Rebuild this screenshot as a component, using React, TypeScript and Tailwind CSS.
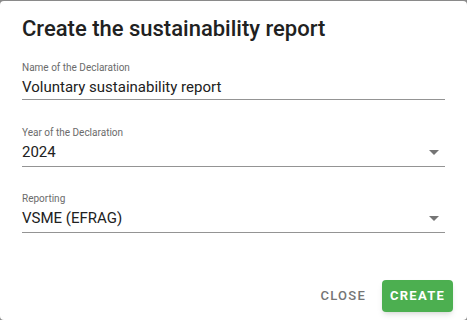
import { useState } from 'react';

type FieldProps = {
  label: string;
  value: string;
  className?: string;
};

function ArrowDown() {
  return (
    <svg className="w-[10px] h-[5px] text-[#757575]" viewBox="0 0 10 5" fill="currentColor">
      <path d="M0 0l5 5 5-5z" />
    </svg>
  );
}

function TextField({ label, value, className }: FieldProps) {
  return (
    <div className={`flex flex-col border-b border-[#949494] ${className ?? ''}`}>
      <span className="text-[10px] leading-[12px] text-[#6b6b6b]">{label}</span>
      <span className="mt-[3px] text-[15px] leading-[20px] text-[#212121] pb-[2px]">{value}</span>
    </div>
  );
}

function SelectField({ label, value, className }: FieldProps) {
  return (
    <div className={`flex flex-col border-b border-[#949494] pb-[2px] ${className ?? ''}`}>
      <span className="text-[10px] leading-[12px] text-[#6b6b6b]">{label}</span>
      <div className="mt-[1px] h-[24px] flex items-center justify-between">
        <span className="text-[15px] leading-[20px] text-[#212121]">{value}</span>
        <span className="mr-[6px] flex">
          <ArrowDown />
        </span>
      </div>
    </div>
  );
}

export default function App() {
  const [open] = useState(true);
  if (!open) return null;

  return (
    <div className="w-[467px] h-[320px] bg-[#8a8a8a] pt-px font-['Roboto',sans-serif]">
      <div className="h-[319px] bg-white rounded-[4px] flex flex-col">
        <h1 className="px-[22px] pt-[12px] text-[22px] leading-[32px] font-medium text-[#212121]">
          Create the sustainability report
        </h1>

        <div className="pl-[22px] pr-[22px] mt-[17px] flex flex-col">
          <TextField label="Name of the Declaration" value="Voluntary sustainability report" />
          <SelectField className="mt-[27px]" label="Year of the Declaration" value="2024" />
          <SelectField className="mt-[26px]" label="Reporting" value="VSME (EFRAG)" />
        </div>

        <div className="mt-auto flex items-center justify-end gap-[4px] pr-[14px] pb-[8px]">
          <button className="h-[32px] px-[12px] rounded-[4px] text-[13px] font-medium tracking-[1.25px] text-[#757575]">
            CLOSE
          </button>
          <button className="h-[32px] px-[8px] rounded-[4px] bg-[#4caf50] text-white text-[13px] font-bold tracking-[1.25px] shadow-md">
            CREATE
          </button>
        </div>
      </div>
    </div>
  );
}
